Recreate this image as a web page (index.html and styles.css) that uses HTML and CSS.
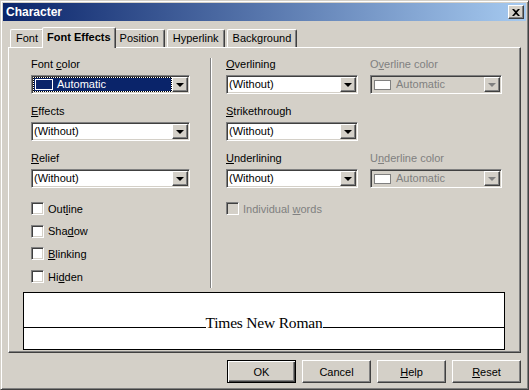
FILE: index.html
```html
<!DOCTYPE html>
<html lang="en">
<head>
    <meta charset="UTF-8">
    <title>Character</title>
    <link rel="stylesheet" href="styles.css">
</head>
<body>
    <div class="window">
        <div class="titlebar">
            <span class="title">Character</span>
            <button class="close-btn">
                <svg width="8" height="7" viewBox="0 0 8 7"><path d="M0 0h2l2 2 2-2h2L5 3.5 8 7H6L4 5 2 7H0l3-3.5z" fill="#000"/></svg>
            </button>
        </div>

        <div class="tabs">
            <div class="tab">Font</div>
            <div class="tab tab-active">Font Effects</div>
            <div class="tab">Position</div>
            <div class="tab">Hyperlink</div>
            <div class="tab">Background</div>
        </div>

        <div class="panel">
            <div class="columns">
                <div class="col-left">
                    <div class="field">
                        <div class="label">Font <u>c</u>olor</div>
                        <div class="combo">
                            <div class="combo-value combo-focus">
                                <span class="swatch"></span>
                                <span>Automatic</span>
                            </div>
                            <div class="combo-btn"><span class="arrow"></span></div>
                        </div>
                    </div>
                    <div class="field">
                        <div class="label"><u>E</u>ffects</div>
                        <div class="combo">
                            <div class="combo-value">(Without)</div>
                            <div class="combo-btn"><span class="arrow"></span></div>
                        </div>
                    </div>
                    <div class="field">
                        <div class="label"><u>R</u>elief</div>
                        <div class="combo">
                            <div class="combo-value">(Without)</div>
                            <div class="combo-btn"><span class="arrow"></span></div>
                        </div>
                    </div>
                    <div class="checks">
                        <div class="check"><span class="box"></span><span>Out<u>l</u>ine</span></div>
                        <div class="check"><span class="box"></span><span>Sha<u>d</u>ow</span></div>
                        <div class="check"><span class="box"></span><span><u>B</u>linking</span></div>
                        <div class="check"><span class="box"></span><span>Hi<u>d</u>den</span></div>
                    </div>
                </div>

                <div class="separator"></div>

                <div class="col-right">
                    <div class="pair">
                        <div class="field">
                            <div class="label"><u>O</u>verlining</div>
                            <div class="combo">
                                <div class="combo-value">(Without)</div>
                                <div class="combo-btn"><span class="arrow"></span></div>
                            </div>
                        </div>
                        <div class="field disabled">
                            <div class="label">O<u>v</u>erline color</div>
                            <div class="combo">
                                <div class="combo-value">
                                    <span class="swatch"></span>
                                    <span>Automatic</span>
                                </div>
                                <div class="combo-btn"><span class="arrow"></span></div>
                            </div>
                        </div>
                    </div>
                    <div class="pair">
                        <div class="field">
                            <div class="label"><u>S</u>trikethrough</div>
                            <div class="combo">
                                <div class="combo-value">(Without)</div>
                                <div class="combo-btn"><span class="arrow"></span></div>
                            </div>
                        </div>
                    </div>
                    <div class="pair">
                        <div class="field">
                            <div class="label"><u>U</u>nderlining</div>
                            <div class="combo">
                                <div class="combo-value">(Without)</div>
                                <div class="combo-btn"><span class="arrow"></span></div>
                            </div>
                        </div>
                        <div class="field disabled">
                            <div class="label">U<u>n</u>derline color</div>
                            <div class="combo">
                                <div class="combo-value">
                                    <span class="swatch"></span>
                                    <span>Automatic</span>
                                </div>
                                <div class="combo-btn"><span class="arrow"></span></div>
                            </div>
                        </div>
                    </div>
                    <div class="checks">
                        <div class="check disabled"><span class="box"></span><span>Individual <u>w</u>ords</span></div>
                    </div>
                </div>
            </div>

            <div class="preview">
                <div class="preview-row">
                    <div class="rule"></div>
                    <span class="preview-text">Times New Roman</span>
                    <div class="rule"></div>
                </div>
            </div>
        </div>

        <div class="buttons">
            <button class="btn btn-default">OK</button>
            <button class="btn">Cancel</button>
            <button class="btn"><u>H</u>elp</button>
            <button class="btn"><u>R</u>eset</button>
        </div>
    </div>
</body>
</html>
```

FILE: styles.css
```css
* {
    margin: 0;
    padding: 0;
    box-sizing: border-box;
}

body {
    background: #d4d0c8;
    font-family: 'Liberation Sans', Arial, sans-serif;
    font-size: 11px;
    color: #000;
}

u {
    text-decoration: underline;
    text-underline-offset: 1px;
}

/* window frame */
.window {
    width: 529px;
    height: 390px;
    background: #d4d0c8;
    border: 1px solid;
    border-color: #d4d0c8 #404040 #404040 #d4d0c8;
    box-shadow: inset 1px 1px #fff, inset -1px -1px #808080;
    padding: 2px;
    display: flex;
    flex-direction: column;
}

.titlebar {
    height: 18px;
    background: linear-gradient(to right, #0a246a, #a6caf0);
    display: flex;
    align-items: center;
    justify-content: space-between;
    padding: 0 2px 0 3px;
}

.title {
    color: #fff;
    font-weight: bold;
    font-size: 12px;
}

.close-btn {
    width: 16px;
    height: 14px;
    background: #d4d0c8;
    border: 1px solid;
    border-color: #fff #404040 #404040 #fff;
    box-shadow: inset -1px -1px #808080;
    display: flex;
    align-items: center;
    justify-content: center;
}

/* tabs */
.tabs {
    display: flex;
    align-items: flex-end;
    height: 26px;
    padding-left: 7px;
}

.tab {
    height: 18px;
    line-height: 16px;
    padding: 0 5px;
    border: 1px solid;
    border-bottom: none;
    border-color: #fff #404040 transparent #fff;
    border-radius: 2px 2px 0 0;
    box-shadow: inset -1px 0 #808080;
    white-space: nowrap;
}

.tab:nth-child(n+4) {
    margin-left: 2px;
}

.tab-active {
    height: 21px;
    line-height: 18px;
    padding: 0 4px;
    margin: 0 -2px -1px;
    font-weight: bold;
    position: relative;
    z-index: 1;
    background: #d4d0c8;
}

/* tab page */
.panel {
    margin: 0 5px;
    height: 306px;
    border: 1px solid;
    border-color: #fff #404040 #404040 #fff;
    box-shadow: inset -1px -1px #808080;
    padding: 9px 15px 0 14px;
}

.columns {
    display: flex;
    height: 231px;
    padding-left: 8px;
}

.col-left {
    width: 159px;
}

.separator {
    width: 2px;
    margin: 1px 14px 0 20px;
    border-left: 1px solid #808080;
    border-right: 1px solid #fff;
}

.pair {
    display: flex;
    gap: 12px;
}

.pair .field {
    width: 132px;
}

.field {
    margin-bottom: 10px;
}

.label {
    height: 14px;
    line-height: 14px;
    margin-bottom: 4px;
    white-space: nowrap;
}

.combo {
    display: flex;
    height: 19px;
    padding: 1px;
    background: #fff;
    border: 1px solid;
    border-color: #808080 #fff #fff #808080;
    box-shadow: inset 1px 1px #404040, inset -1px -1px #d4d0c8;
}

.combo-value {
    flex: 1;
    height: 15px;
    line-height: 15px;
    padding-left: 1px;
    white-space: nowrap;
    overflow: hidden;
    display: flex;
    align-items: center;
}

.combo-focus {
    background: linear-gradient(#0a246a, #0a246a) padding-box, #000;
    border: 1px dotted #fff;
    color: #fff;
    padding-left: 1px;
    gap: 4px;
}

.swatch {
    display: block;
    width: 18px;
    height: 11px;
    border: 1px solid #fff;
}

.combo-btn {
    width: 16px;
    height: 15px;
    background: #d4d0c8;
    border: 1px solid;
    border-color: #fff #404040 #404040 #fff;
    box-shadow: inset -1px -1px #808080;
    display: flex;
    align-items: center;
    justify-content: center;
}

.arrow {
    width: 0;
    height: 0;
    border-left: 4px solid transparent;
    border-right: 4px solid transparent;
    border-top: 4px solid #000;
    margin-left: -1px;
}

.disabled {
    color: #808080;
}

.disabled .combo {
    background: #d4d0c8;
}

.disabled .combo-value {
    padding-left: 2px;
    gap: 5px;
}

.disabled .swatch {
    width: 17px;
    height: 10px;
    border-color: #808080;
    background: #fff;
}

.disabled .arrow {
    border-top-color: #808080;
}

/* check boxes */
.checks {
    display: flex;
    flex-direction: column;
    gap: 1.7px;
}

.check {
    height: 21px;
    display: flex;
    align-items: center;
    gap: 4px;
    white-space: nowrap;
}

.box {
    width: 13px;
    height: 13px;
    background: #fff;
    border: 1px solid;
    border-color: #808080 #fff #fff #808080;
    box-shadow: inset 1px 1px #404040, inset -1px -1px #d4d0c8;
}

.check.disabled .box {
    background: #d4d0c8;
}

/* preview */
.preview {
    margin-top: 4px;
    height: 58px;
    background: #fff;
    border: 1px solid #000;
    padding-top: 21px;
}

.preview-row {
    display: flex;
    align-items: baseline;
}

.rule {
    flex: 1;
    border-bottom: 1px solid #000;
}

.preview-text {
    font-family: 'Liberation Serif', 'Times New Roman', serif;
    font-size: 15.5px;
    letter-spacing: -0.2px;
}

/* dialog buttons */
.buttons {
    display: flex;
    justify-content: flex-end;
    gap: 6px;
    margin: 7px 5px 0 0;
}

.btn {
    width: 69px;
    height: 23px;
    background: #d4d0c8;
    font-family: inherit;
    font-size: 11px;
    color: #000;
    border: 1px solid;
    border-color: #fff #404040 #404040 #fff;
    box-shadow: inset -1px -1px #808080;
}

.btn-default {
    border-color: #000;
    box-shadow: inset 1px 1px #fff, inset -1px -1px #404040, inset -2px -2px #808080;
}
```
